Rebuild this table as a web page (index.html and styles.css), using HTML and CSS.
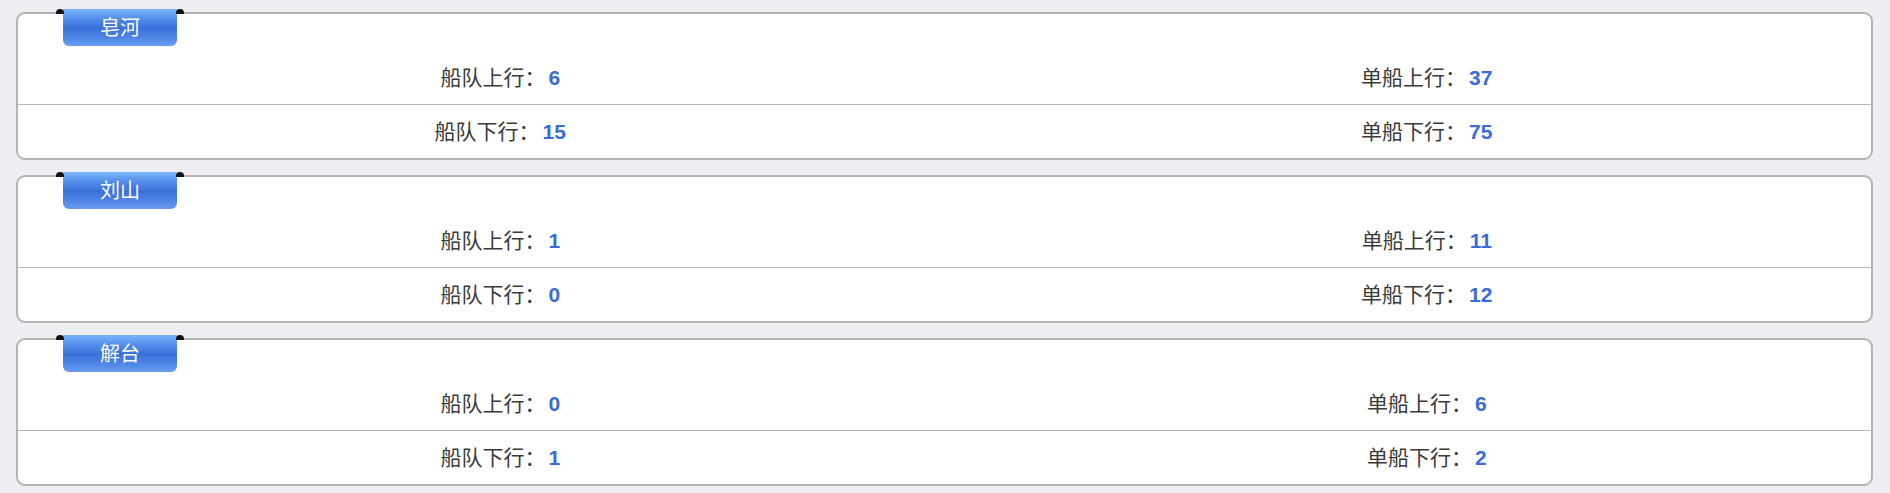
FILE: index.html
```html
<!DOCTYPE html>
<html lang="zh-CN">
<head>
<meta charset="utf-8">
<title>船舶统计</title>
<link rel="stylesheet" href="styles.css">
</head>
<body>
<div class="page">
  <section class="card">
    <div class="tab">皂河</div>
    <div class="row">
      <div class="cell">船队上行：<b class="num">6</b></div>
      <div class="cell">单船上行：<b class="num">37</b></div>
    </div>
    <div class="row">
      <div class="cell">船队下行：<b class="num">15</b></div>
      <div class="cell">单船下行：<b class="num">75</b></div>
    </div>
  </section>
  <section class="card">
    <div class="tab">刘山</div>
    <div class="row">
      <div class="cell">船队上行：<b class="num">1</b></div>
      <div class="cell">单船上行：<b class="num">11</b></div>
    </div>
    <div class="row">
      <div class="cell">船队下行：<b class="num">0</b></div>
      <div class="cell">单船下行：<b class="num">12</b></div>
    </div>
  </section>
  <section class="card">
    <div class="tab">解台</div>
    <div class="row">
      <div class="cell">船队上行：<b class="num">0</b></div>
      <div class="cell">单船上行：<b class="num">6</b></div>
    </div>
    <div class="row">
      <div class="cell">船队下行：<b class="num">1</b></div>
      <div class="cell">单船下行：<b class="num">2</b></div>
    </div>
  </section>
</div>
</body>
</html>
```
FILE: styles.css
```css
html, body {
  margin: 0;
  padding: 0;
  background: #eeeef2;
}
body {
  font-family: "Microsoft YaHei", "Noto Sans CJK SC", "Liberation Sans", sans-serif;
}
.page {
  display: flex;
  flex-direction: column;
  gap: 15px;
  padding: 12px 17px 8px 16px;
}
.card {
  position: relative;
  box-sizing: border-box;
  height: 148px;
  padding-top: 37px;
  background: #fff;
  border: 2px solid #b4b4b4;
  border-radius: 9px;
}
.tab {
  position: absolute;
  top: -5px;
  left: 45px;
  width: 114px;
  height: 37px;
  box-sizing: border-box;
  border-radius: 0 0 6px 6px;
  background: linear-gradient(to bottom, #79b4fa 0%, #4f8aea 30%, #3b6fd9 52%, #4f86e6 78%, #6a9df0 100%);
  color: #fff;
  font-size: 20px;
  line-height: 35px;
  text-align: center;
}
.tab::before,
.tab::after {
  content: "";
  position: absolute;
  top: 0;
  width: 8px;
  height: 5px;
  background: #111;
  border-radius: 6px 6px 0 0;
}
.tab::before { left: -7px; }
.tab::after { right: -7px; }
.row {
  display: grid;
  grid-template-columns: 1fr 1fr;
  height: 53px;
  align-items: center;
}
.row + .row {
  border-top: 1px solid #b8b8b8;
}
.cell {
  padding-left: 38px;
  margin-bottom: 3px;
  text-align: center;
  font-size: 21px;
  color: #3a3a3a;
  white-space: nowrap;
}
.num {
  font-family: "Liberation Sans", Arial, sans-serif;
  font-weight: bold;
  color: #3a6bd6;
  font-size: 21px;
  margin-left: 3px;
}
```
